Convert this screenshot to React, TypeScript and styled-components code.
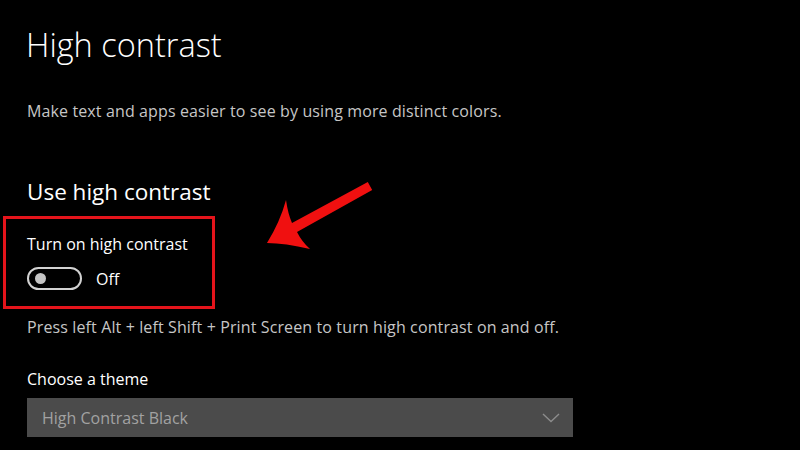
import styled, { createGlobalStyle } from "styled-components";

const GlobalStyle = createGlobalStyle`
  html, body {
    margin: 0;
    padding: 0;
    background: #000;
  }
  body {
    font-family: "Open Sans", "Noto Sans", "Liberation Sans", sans-serif;
  }
`;

const Page = styled.div`
  position: relative;
  width: 800px;
  height: 450px;
  overflow: hidden;
  background: #000;
  box-sizing: border-box;
  padding: 25px 0 0 27px;
  display: flex;
  flex-direction: column;
  align-items: flex-start;
`;

const Title = styled.h1`
  margin: 0 0 0 -1px;
  font-size: 32.5px;
  font-weight: 300;
  line-height: 40px;
  color: #fff;
`;

const Description = styled.p<{ $gap: number }>`
  margin: ${(p) => p.$gap}px 0 0;
  font-size: 16px;
  letter-spacing: 0.12px;
  line-height: 20px;
  color: #c6c6c6;
  white-space: nowrap;
`;

const SectionTitle = styled.h2`
  margin: 57px 0 0;
  font-size: 22.5px;
  font-weight: 400;
  line-height: 28px;
  color: #fff;
`;

const HighlightBox = styled.div`
  margin: 10px 0 0 -24px;
  width: 212px;
  box-sizing: border-box;
  border: 3px solid #e5141b;
  padding: 14px 0 16px 21px;
  display: flex;
  flex-direction: column;
`;

const Label = styled.div<{ $gap?: number }>`
  margin-top: ${(p) => p.$gap ?? 0}px;
  font-size: 16px;
  line-height: 22px;
  color: #fff;
`;

const ToggleRow = styled.div`
  margin-top: 12px;
  display: flex;
  align-items: center;
  gap: 14px;
`;

const Toggle = styled.div`
  width: 55px;
  height: 23px;
  box-sizing: border-box;
  border: 2px solid #d2d2d2;
  border-radius: 12px;
  display: flex;
  align-items: center;
  padding-left: 6px;
`;

const Knob = styled.span`
  width: 11px;
  height: 11px;
  border-radius: 50%;
  background: #c4c4c4;
`;

const ToggleText = styled.span`
  font-size: 16px;
  line-height: 22px;
  color: #fff;
`;

const Select = styled.div`
  margin-top: 8px;
  width: 546px;
  height: 39px;
  box-sizing: border-box;
  background: #4b4b4b;
  display: flex;
  align-items: center;
  justify-content: space-between;
  padding: 0 13px 0 15px;
`;

const SelectText = styled.span`
  font-size: 16px;
  color: #a2a2a2;
`;

const Pointer = styled.svg`
  position: absolute;
  left: 255px;
  top: 175px;
`;

export default function App() {
  return (
    <>
      <GlobalStyle />
      <Page>
        <Title>High contrast</Title>
        <Description $gap={36}>
          Make text and apps easier to see by using more distinct colors.
        </Description>
        <SectionTitle>Use high contrast</SectionTitle>
        <HighlightBox>
          <Label>Turn on high contrast</Label>
          <ToggleRow>
            <Toggle>
              <Knob />
            </Toggle>
            <ToggleText>Off</ToggleText>
          </ToggleRow>
        </HighlightBox>
        <Description $gap={8}>
          Press left Alt + left Shift + Print Screen to turn high contrast on and off.
        </Description>
        <Label $gap={31}>Choose a theme</Label>
        <Select>
          <SelectText>High Contrast Black</SelectText>
          <svg width="18" height="10" viewBox="0 0 18 10">
            <path d="M1 1 L9 8.5 L17 1" fill="none" stroke="#8c8c8c" strokeWidth="1.4" />
          </svg>
        </Select>
        <Pointer width="125" height="80" viewBox="255 175 125 80">
          <path
            d="M367.8 182.1 L372.2 189.9 L297 232 Q302 242 310 249 Q285 243 267 243 Q280 222 286 200 Q288 214 292 223 Z"
            fill="#f01010"
          />
        </Pointer>
      </Page>
    </>
  );
}
